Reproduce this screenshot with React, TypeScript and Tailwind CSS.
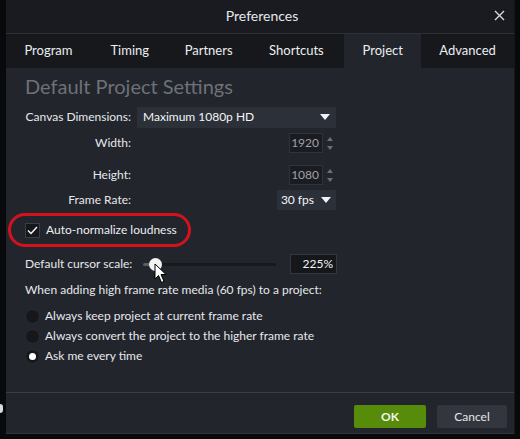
import React from "react";

const tabs: { name: string; w: string }[] = [
  { name: "Program", w: "w-[85px]" },
  { name: "Timing", w: "w-[78px]" },
  { name: "Partners", w: "w-[80px]" },
  { name: "Shortcuts", w: "w-[96px]" },
  { name: "Project", w: "w-[77px]" },
  { name: "Advanced", w: "w-[93px]" },
];

function Spinner() {
  return (
    <div className="flex flex-col items-center justify-center gap-[5px] w-[13px]">
      <svg width="6" height="4" viewBox="0 0 6 4"><path d="M0 4 L3 0 L6 4 Z" fill="#6b6f77" /></svg>
      <svg width="6" height="4" viewBox="0 0 6 4"><path d="M0 0 L3 4 L6 0 Z" fill="#6b6f77" /></svg>
    </div>
  );
}

function NumberBox({ value }: { value: string }) {
  return (
    <div className="flex items-center">
      <div className="w-[34px] h-[20px] bg-[#1a1c21] border border-[#30333a] flex items-center justify-end pr-[3px] text-[12px] text-[#9ea1a7]">
        {value}
      </div>
      <Spinner />
    </div>
  );
}

function Caret() {
  return (
    <svg width="10" height="6" viewBox="0 0 10 6"><path d="M0 0 L10 0 L5 6 Z" fill="#f2f3f5" /></svg>
  );
}

function Radio({ checked, label }: { checked?: boolean; label: string }) {
  return (
    <div className="flex items-center h-[20px]">
      <span className="w-[15px] h-[15px] rounded-full bg-[#15171b] border border-[#2a2d33] flex items-center justify-center">
        {checked && <span className="w-[7px] h-[7px] rounded-full bg-white" />}
      </span>
      <span className="ml-[5px] text-[12px] text-[#e6e8eb]">{label}</span>
    </div>
  );
}

export default function App() {
  return (
    <div
      className="w-[520px] h-[439px] bg-[#08090b] flex relative overflow-hidden"
      style={{ fontFamily: "Lato, 'Open Sans', sans-serif" }}
    >
      <span className="absolute left-0 top-[404px] w-[3px] h-[9px] rounded-r bg-[#d9dadc]" />
      <div className="ml-[6px] w-[509px] h-[434px] bg-[#22252c] flex flex-col border-r border-[#15171b]">
        {/* title bar */}
        <div className="h-[34px] bg-[#191b20] border-b border-[#2c2f35] flex items-center justify-center relative shrink-0">
          <span className="text-[14px] text-[#e6e7ea] ml-[4px] mb-[2px]">Preferences</span>
          <svg className="absolute right-[9px] top-[10px]" width="11" height="11" viewBox="0 0 11 11">
            <path d="M1 1 L10 10 M10 1 L1 10" stroke="#d8d9dc" strokeWidth="1.4" />
          </svg>
        </div>
        {/* tab strip */}
        <div className="h-[34px] bg-[#16181c] flex items-stretch shrink-0">
          {tabs.map((t) => (
            <div
              key={t.name}
              className={
                "flex items-center justify-center text-[13px] text-[#eceef0] " +
                t.w +
                (t.name === "Project" ? " bg-[#22252c]" : "")
              }
            >
              {t.name}
            </div>
          ))}
        </div>
        {/* body */}
        <div className="flex-1 flex flex-col pl-[19px] pr-[18px]">
          <div className="mt-[6px] text-[20px] leading-[24px] text-[#6e7178]">Default Project Settings</div>

          <div className="mt-[8px] grid grid-cols-[106px_199px] gap-x-[6px] items-center text-[12px] text-[#e6e8eb]">
            <div className="text-right h-[22px] leading-[22px]">Canvas Dimensions:</div>
            <div className="h-[21px] bg-[#2c3038] flex items-center justify-between px-[6px]">
              <span className="text-[#f4f5f6]">Maximum 1080p HD</span>
              <Caret />
            </div>

            <div className="text-right mt-[5px]">Width:</div>
            <div className="flex justify-end mt-[5px]"><NumberBox value="1920" /></div>

            <div className="text-right mt-[12px]">Height:</div>
            <div className="flex justify-end mt-[12px]"><NumberBox value="1080" /></div>

            <div className="text-right mt-[5px]">Frame Rate:</div>
            <div className="flex justify-end mt-[5px]">
              <div className="h-[20px] bg-[#2c3038] flex items-center gap-[7px] pl-[4px] pr-[5px] text-[#f4f5f6]">
                <span>30 fps</span>
                <Caret />
              </div>
            </div>
          </div>

          {/* checkbox with annotation ring */}
          <div className="mt-[10px] h-[20px] flex items-center relative">
            <span className="absolute left-[-17px] top-[-7px] w-[183px] h-[34px] rounded-[17px] border-[3px] border-[#d3121e]" />
            <span className="w-[15px] h-[15px] bg-[#15171b] border border-[#3a3d44] flex items-center justify-center">
              <svg width="11" height="9" viewBox="0 0 11 9"><path d="M1 4.5 L4 7.5 L10 1" stroke="#f2f3f5" strokeWidth="1.5" fill="none" /></svg>
            </span>
            <span className="ml-[6px] text-[12px] text-[#eceef0]">Auto-normalize loudness</span>
          </div>

          {/* cursor scale slider */}
          <div className="mt-[14px] flex items-center h-[20px] text-[12px] text-[#e6e8eb]">
            <span className="w-[118px]">Default cursor scale:</span>
            <div className="w-[133px] h-[3px] bg-[#17191d] rounded relative">
              <span className="absolute left-0 top-0 h-[3px] w-[12px] bg-[#5a5d63] rounded" />
              <span className="absolute left-[6px] top-[-5px] w-[13px] h-[13px] rounded-full bg-[#f2f2f2]" />
              <svg className="absolute left-[11px] top-[0px]" width="14" height="21" viewBox="0 0 14 21">
                <path d="M1 1 L1 16 L4.5 12.5 L7.5 19.5 L10 18.3 L7 11.5 L12 11.5 Z" fill="#ffffff" stroke="#000000" strokeWidth="1" strokeLinejoin="round" />
              </svg>
            </div>
            <div className="ml-[14px] w-[47px] h-[20px] bg-[#15171b] border border-[#34373e] flex items-center justify-end pr-[3px] text-[#f2f3f5]">225%</div>
          </div>

          <div className="mt-[7px] text-[12px] text-[#e6e8eb]">When adding high frame rate media (60 fps) to a project:</div>

          <div className="mt-[7px] flex flex-col">
            <Radio label="Always keep project at current frame rate" />
            <Radio label="Always convert the project to the higher frame rate" />
            <Radio checked label="Ask me every time" />
          </div>
        </div>

        {/* footer */}
        <div className="h-[42px] border-t border-[#3a3d44] flex items-start justify-end gap-[11px] pt-[12px] pr-[7px] shrink-0 border-b border-b-[#30343b]">
          <button className="w-[72px] h-[23px] rounded-[2px] bg-[#578b0a] text-[12px] font-bold text-[#f4f6ef]">OK</button>
          <button className="w-[70px] h-[23px] rounded-[2px] bg-[#33363e] text-[12px] text-[#e3e5e8]">Cancel</button>
        </div>
      </div>
    </div>
  );
}
